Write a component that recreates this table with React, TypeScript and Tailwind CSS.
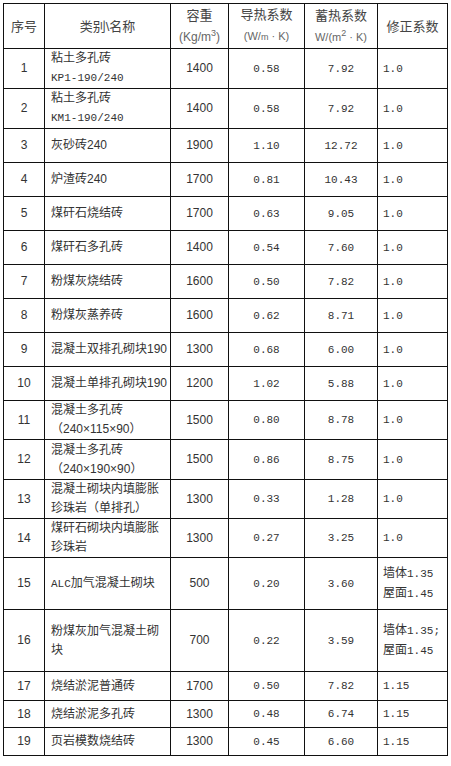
const cjk = '"Liberation Sans", "Noto Sans CJK SC", sans-serif';

type Row = {
  no: string;
  name: React.ReactNode;
  density: string;
  k: string;
  s: string;
  fix: React.ReactNode;
  h: string;
};

const Mono = ({ children }: { children: React.ReactNode }) => (
  <span className="font-['Liberation_Mono',monospace] text-[11px]">{children}</span>
);

const rows: Row[] = [
  { no: "1", name: <>粘土多孔砖<br /><Mono>KP1-190/240</Mono></>, density: "1400", k: "0.58", s: "7.92", fix: "1.0", h: "h-[39px]" },
  { no: "2", name: <>粘土多孔砖<br /><Mono>KM1-190/240</Mono></>, density: "1400", k: "0.58", s: "7.92", fix: "1.0", h: "h-[37px]" },
  { no: "3", name: "灰砂砖240", density: "1900", k: "1.10", s: "12.72", fix: "1.0", h: "h-[34px]" },
  { no: "4", name: "炉渣砖240", density: "1700", k: "0.81", s: "10.43", fix: "1.0", h: "h-[34px]" },
  { no: "5", name: "煤矸石烧结砖", density: "1700", k: "0.63", s: "9.05", fix: "1.0", h: "h-[34px]" },
  { no: "6", name: "煤矸石多孔砖", density: "1400", k: "0.54", s: "7.60", fix: "1.0", h: "h-[34px]" },
  { no: "7", name: "粉煤灰烧结砖", density: "1600", k: "0.50", s: "7.82", fix: "1.0", h: "h-[34px]" },
  { no: "8", name: "粉煤灰蒸养砖", density: "1600", k: "0.62", s: "8.71", fix: "1.0", h: "h-[34px]" },
  { no: "9", name: "混凝土双排孔砌块190", density: "1300", k: "0.68", s: "6.00", fix: "1.0", h: "h-[34px]" },
  { no: "10", name: "混凝土单排孔砌块190", density: "1200", k: "1.02", s: "5.88", fix: "1.0", h: "h-[34px]" },
  { no: "11", name: <>混凝土多孔砖<br />（240×115×90）</>, density: "1500", k: "0.80", s: "8.78", fix: "1.0", h: "h-[38px]" },
  { no: "12", name: <>混凝土多孔砖<br />（240×190×90）</>, density: "1500", k: "0.86", s: "8.75", fix: "1.0", h: "h-[40px]" },
  { no: "13", name: <>混凝土砌块内填膨胀<br />珍珠岩（单排孔）</>, density: "1300", k: "0.33", s: "1.28", fix: "1.0", h: "h-[39px]" },
  { no: "14", name: <>煤矸石砌块内填膨胀<br />珍珠岩</>, density: "1300", k: "0.27", s: "3.25", fix: "1.0", h: "h-[38px]" },
  { no: "15", name: <><Mono>ALC</Mono>加气混凝土砌块</>, density: "500", k: "0.20", s: "3.60", fix: <>墙体<Mono>1.35</Mono><br />屋面<Mono>1.45</Mono></>, h: "h-[52px]" },
  { no: "16", name: <>粉煤灰加气混凝土砌<br />块</>, density: "700", k: "0.22", s: "3.59", fix: <>墙体<Mono>1.35;</Mono><br />屋面<Mono>1.45</Mono></>, h: "h-[62px]" },
  { no: "17", name: "烧结淤泥普通砖", density: "1700", k: "0.50", s: "7.82", fix: "1.15", h: "h-[29px]" },
  { no: "18", name: "烧结淤泥多孔砖", density: "1300", k: "0.48", s: "6.74", fix: "1.15", h: "h-[27px]" },
  { no: "19", name: "页岩模数烧结砖", density: "1300", k: "0.45", s: "6.60", fix: "1.15", h: "h-[28px]" },
];

const td = "border border-[#111] align-middle p-0";

export default function App() {
  return (
    <div className="w-[451px] h-[766px] bg-white pt-[3px] pl-[3px]" style={{ fontFamily: cjk }}>
      <table className="table-fixed border-collapse text-[12px] leading-[19px] text-[#333]">
        <colgroup>
          <col className="w-[41px]" />
          <col className="w-[126px]" />
          <col className="w-[58px]" />
          <col className="w-[76px]" />
          <col className="w-[73px]" />
          <col className="w-[70px]" />
        </colgroup>
        <thead>
          <tr className="text-[#444] text-[13px]">
            <td className={`${td} h-[45px] text-center`}>序号</td>
            <td className={`${td} text-center`}>类别\名称</td>
            <td className={`${td} text-center leading-[21px]`}>
              容重<br />
              <span className="text-[12px] text-[#666]">(Kg/m<sup className="text-[9px]">3</sup>)</span>
            </td>
            <td className={`${td} text-center leading-[21px]`}>
              导热系数<br />
              <span className="text-[11px] text-[#666]">(W/<span className="text-[9px]">m</span> · K)</span>
            </td>
            <td className={`${td} text-center leading-[21px]`}>
              蓄热系数<br />
              <span className="text-[11px] text-[#666]">W/(m<sup className="text-[9px]">2</sup> · K)</span>
            </td>
            <td className={`${td} text-center`}>修正系数</td>
          </tr>
        </thead>
        <tbody>
          {rows.map((r) => (
            <tr key={r.no}>
              <td className={`${td} ${r.h} text-center`}>{r.no}</td>
              <td className={`${td} pl-[6px] pr-[1px] whitespace-nowrap`}>{r.name}</td>
              <td className={`${td} text-center`}>{r.density}</td>
              <td className={`${td} text-center`}><Mono>{r.k}</Mono></td>
              <td className={`${td} text-center`}><Mono>{r.s}</Mono></td>
              <td className={`${td} pl-[5px] whitespace-nowrap`}>{typeof r.fix === "string" ? <Mono>{r.fix}</Mono> : r.fix}</td>
            </tr>
          ))}
        </tbody>
      </table>
    </div>
  );
}
